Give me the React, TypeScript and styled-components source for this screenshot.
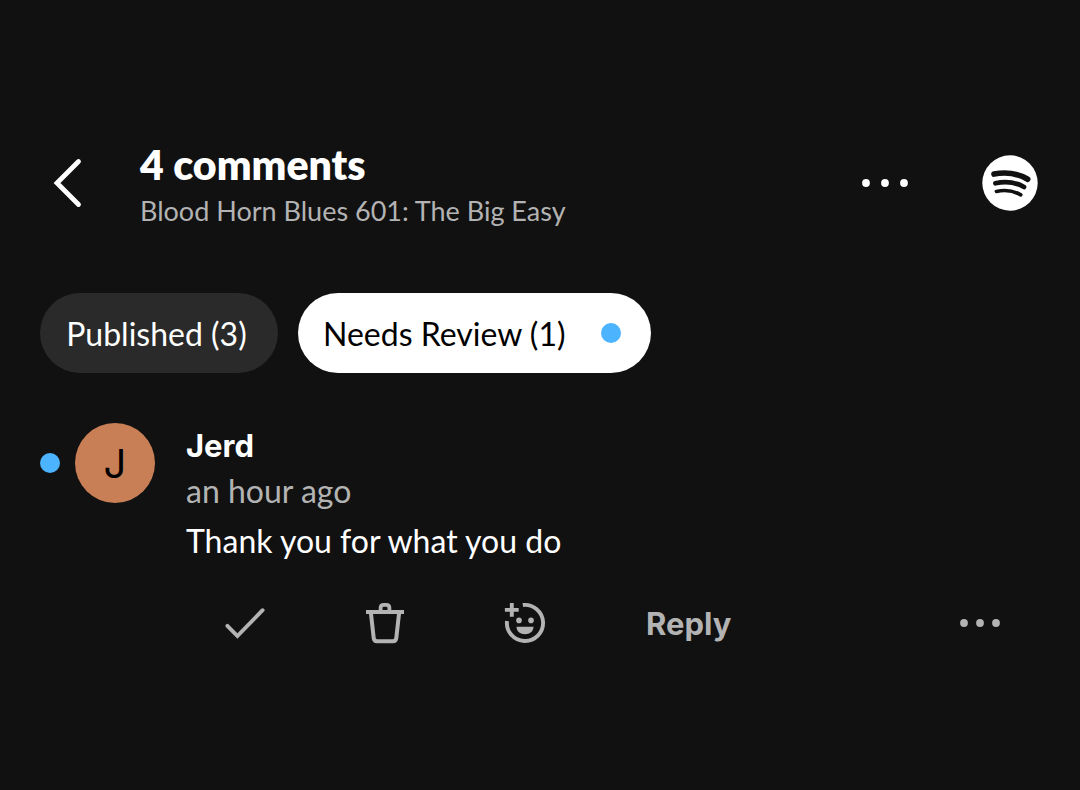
import React from 'react';
import styled, { createGlobalStyle } from 'styled-components';

const GlobalStyle = createGlobalStyle`
  *, *::before, *::after { box-sizing: border-box; }
  body {
    margin: 0;
    background: #111;
    color: #fff;
    font-family: Lato, "Liberation Sans", sans-serif;
  }
  h1, h2, p { margin: 0; }
`;

const Page = styled.main`
  padding: 143px 40px 40px;
`;

const Header = styled.header`
  display: flex;
  align-items: center;
  height: 80px;
  margin-right: 2px;
`;

const IconButton = styled.button<{ $tone?: string }>`
  display: flex;
  align-items: center;
  justify-content: center;
  flex: none;
  width: 56px;
  height: 56px;
  padding: 0;
  border: 0;
  background: none;
  color: ${({ $tone }) => $tone ?? '#fff'};
  cursor: pointer;

  svg { display: block; flex: none; }
`;

const Heading = styled.div`
  flex: 1;
  min-width: 0;
  margin-left: 44px;
  padding-top: 8px;
`;

const Title = styled.h1`
  font-size: 41px;
  line-height: 48px;
  font-weight: 800;
`;

const Subtitle = styled.p`
  font-size: 27px;
  line-height: 44px;
  color: #b3b3b3;
`;

const HeaderActions = styled.div`
  display: flex;
  align-items: center;
  gap: 69px;
`;

const Tabs = styled.nav`
  display: flex;
  gap: 20px;
  margin-top: 70px;
`;

const Tab = styled.button<{ $active?: boolean }>`
  display: flex;
  align-items: center;
  justify-content: ${({ $active }) => ($active ? 'flex-start' : 'center')};
  gap: 35px;
  min-width: 238px;
  height: 80px;
  padding: 0 30px 0 25px;
  border: 0;
  border-radius: 40px;
  background: ${({ $active }) => ($active ? '#fff' : '#2a2a2a')};
  color: ${({ $active }) => ($active ? '#000' : '#fff')};
  font-family: inherit;
  font-size: 32px;
  line-height: 40px;
  white-space: nowrap;
  cursor: pointer;
`;

const TabLabel = styled.span`
  padding-top: 2px;
`;

const Dot = styled.span`
  flex: none;
  width: 20px;
  height: 20px;
  border-radius: 50%;
  background: #4cb3ff;
`;

const Comment = styled.article`
  display: flex;
  align-items: flex-start;
  margin-top: 50px;
`;

const Author = styled.div`
  display: flex;
  align-items: center;
  gap: 15px;
`;

const Avatar = styled.div`
  display: flex;
  align-items: center;
  justify-content: center;
  width: 80px;
  height: 80px;
  border-radius: 50%;
  background: #c87f56;
  color: #000;
  font-family: Inter, sans-serif;
  font-size: 40px;
`;

const Body = styled.div`
  margin-left: 31px;
  font-size: 32px;
`;

const Name = styled.h2`
  font-family: Inter, sans-serif;
  font-size: 31px;
  line-height: 46px;
  font-weight: 700;
`;

const Time = styled.p`
  line-height: 44px;
  color: #b3b3b3;
`;

const Message = styled.p`
  line-height: 56px;
`;

const Actions = styled.footer`
  display: flex;
  align-items: center;
  gap: 84px;
  margin: 26px 32px 0 177px;
`;

const ReplyButton = styled.button`
  padding: 2px 0 0;
  margin-left: 9px;
  border: 0;
  background: none;
  color: #b3b3b3;
  font-family: Inter, sans-serif;
  font-size: 31px;
  font-weight: 700;
  line-height: 40px;
  cursor: pointer;
`;

const Spacer = styled.div`
  flex: 1;
`;

const BackIcon = () => (
  <svg width="56" height="56" viewBox="0 0 56 56" fill="none" stroke="currentColor" strokeWidth="4.8" strokeLinecap="round">
    <path d="M38.5 6.5L17 28L38.5 49.5" />
  </svg>
);

const DotsIcon = ({ spread, radius }: { spread: number; radius: number }) => (
  <svg width="56" height="56" viewBox="0 0 56 56" fill="currentColor">
    <circle cx={28 - spread} cy="28" r={radius} />
    <circle cx="28" cy="28" r={radius} />
    <circle cx={28 + spread} cy="28" r={radius} />
  </svg>
);

const SpotifyIcon = () => (
  <svg width="56" height="56" viewBox="0 0 56 56" fill="none" stroke="#111" strokeLinecap="round">
    <circle cx="28" cy="28" r="27.7" fill="#fff" stroke="none" />
    <path d="M12 19.1Q30.5 15.5 45.7 24.2" strokeWidth="5.6" />
    <path d="M13.4 28.3Q29 24.6 42 32" strokeWidth="4.7" />
    <path d="M14.4 36.4Q28 33.4 38.8 39.9" strokeWidth="3.6" />
  </svg>
);

const CheckIcon = () => (
  <svg width="56" height="56" viewBox="0 0 56 56" fill="none" stroke="currentColor" strokeWidth="3.9" strokeLinecap="round">
    <path d="M10.4 30.8L20.4 41L45.6 15.2" />
  </svg>
);

const TrashIcon = () => (
  <svg width="56" height="56" viewBox="0 0 56 56" fill="none" stroke="currentColor">
    <path d="M9 17H47" strokeWidth="3.8" />
    <path d="M23.6 17V13C23.6 11 24.8 9.8 26.8 9.8H29.2C31.2 9.8 32.4 11 32.4 13V17" strokeWidth="3.8" />
    <path d="M13.8 17L16.7 43C16.9 45 18.1 46.2 20 46.2H36C37.9 46.2 39.1 45 39.3 43L42.2 17" strokeWidth="4" />
  </svg>
);

const ReactionIcon = () => (
  <svg width="56" height="56" viewBox="0 0 56 56" fill="none" stroke="currentColor" strokeWidth="3.9">
    <path d="M25.8 10A18.1 18.1 0 1 1 10 26" />
    <path d="M14.8 8V21.8M7.9 14.9H21.7" />
    <g fill="currentColor" stroke="none">
      <circle cx="22" cy="25.4" r="2.8" />
      <circle cx="34" cy="25.4" r="2.8" />
      <path d="M19.5 31.8H36.5C36.5 36.4 32.8 39.3 28 39.3S19.5 36.4 19.5 31.8Z" />
    </g>
  </svg>
);

export default function App() {
  return (
    <>
      <GlobalStyle />
      <Page>
        <Header>
          <IconButton aria-label="Back"><BackIcon /></IconButton>
          <Heading>
            <Title>4 comments</Title>
            <Subtitle>Blood Horn Blues 601: The Big Easy</Subtitle>
          </Heading>
          <HeaderActions>
            <IconButton aria-label="More options"><DotsIcon spread={19} radius={3.9} /></IconButton>
            <IconButton aria-label="Spotify"><SpotifyIcon /></IconButton>
          </HeaderActions>
        </Header>

        <Tabs>
          <Tab><TabLabel>Published (3)</TabLabel></Tab>
          <Tab $active><TabLabel>Needs Review (1)</TabLabel><Dot /></Tab>
        </Tabs>

        <Comment>
          <Author>
            <Dot />
            <Avatar>J</Avatar>
          </Author>
          <Body>
            <Name>Jerd</Name>
            <Time>an hour ago</Time>
            <Message>Thank you for what you do</Message>
          </Body>
        </Comment>

        <Actions>
          <IconButton $tone="#b3b3b3" aria-label="Approve"><CheckIcon /></IconButton>
          <IconButton $tone="#b3b3b3" aria-label="Delete"><TrashIcon /></IconButton>
          <IconButton $tone="#b3b3b3" aria-label="Add reaction"><ReactionIcon /></IconButton>
          <ReplyButton>Reply</ReplyButton>
          <Spacer />
          <IconButton $tone="#b3b3b3" aria-label="More comment options"><DotsIcon spread={16} radius={3.9} /></IconButton>
        </Actions>
      </Page>
    </>
  );
}
